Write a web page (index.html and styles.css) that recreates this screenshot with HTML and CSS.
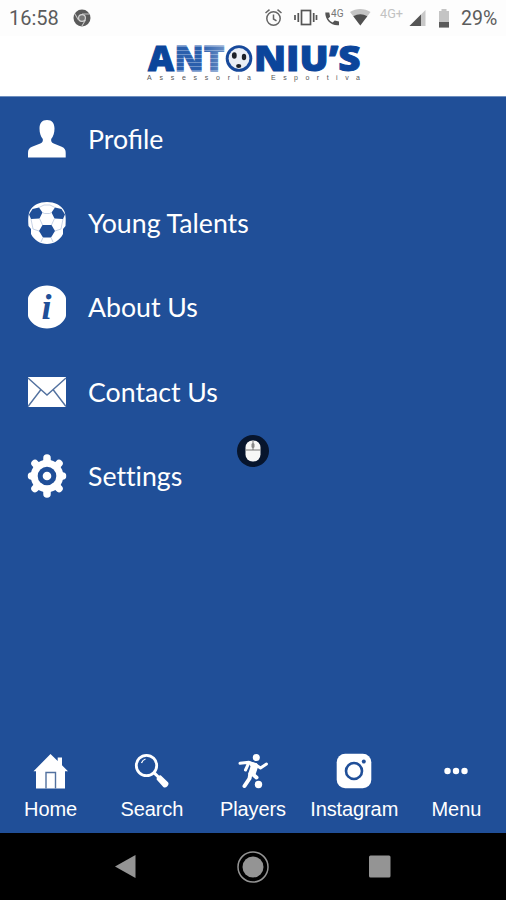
FILE: index.html
```html
<!DOCTYPE html>
<html lang="en">
<head>
  <meta charset="UTF-8">
  <meta name="viewport" content="width=device-width, initial-scale=1.0">
  <title>Menu - Antoniu's Assessoria Esportiva</title>
  <link rel="stylesheet" href="styles.css">
</head>
<body>
  <div class="status-bar">
    <span class="status-time">16:58</span>
    <svg class="status-chrome" width="18" height="18" viewBox="0 0 18 18">
      <circle cx="9" cy="9" r="8.5" fill="#5a5a5a"/>
      <path d="M9 5h7.5M5.500 11L1.800 4.700M12.500 11L8.800 17.300" stroke="#c4c4c4" stroke-width="1.1"/>
      <circle cx="9" cy="9" r="3.400" fill="#777" stroke="#d5d5d5" stroke-width="1.200"/>
    </svg>
    <svg class="status-icons" width="170" height="22" viewBox="261 7 170 22">
      <!-- alarm -->
      <g fill="none" stroke="#666" stroke-width="1.5">
        <circle cx="273.500" cy="18.500" r="6.700"/>
        <path d="M273.500 14.500v4.500l3 1.800M265.500 13l4-3.400M281.500 13l-4-3.400"/>
      </g>
      <!-- vibrate -->
      <g fill="none" stroke="#555" stroke-width="1.700">
        <rect x="301.500" y="10.500" width="9" height="14"/>
        <path d="M298.300 13v9M295 15v5M313.700 13v9M316.500 15v5"/>
      </g>
      <!-- call over 4G -->
      <path d="M325.300 12.500h4l.8 4.200-2 1.800c1.300 2 2.600 3.200 4.600 4.100l2-2 4.300.9v3.700c-8 .9-14-5.500-13.700-12.700z" fill="#555"/>
      <text class="tiny-label" x="331" y="17" textLength="12.500" lengthAdjust="spacingAndGlyphs">4G</text>
      <!-- wifi -->
      <path d="M350 12c6-4 14.500-4 20.500 0L360.300 25.500z" fill="#c4c4c4"/>
      <path d="M353.300 16.200c4.500-2.700 9.500-2.700 14 0l-7 9.300z" fill="#505050"/>
      <text class="network-label" x="380" y="18" textLength="23" lengthAdjust="spacingAndGlyphs">4G+</text>
      <!-- signal -->
      <path d="M425.500 10v16H409.500z" fill="#c8c8c8"/>
      <path d="M421 14.500V26h-11.500z" fill="#555"/>
    </svg>
    <svg class="status-battery" width="12" height="19" viewBox="0 0 12 19">
      <path d="M3.500 0h5v2H11v16.500H1V2h2.500z" fill="#c4c4c4"/>
      <path d="M1 13h10v5.500H1z" fill="#5a5a5a"/>
    </svg>
    <span class="status-percent">29%</span>
  </div>

  <header class="header">
    <svg class="logo" width="218" height="46" viewBox="0 0 218 46">
      <defs>
        <pattern id="stripes" width="4" height="4" patternUnits="userSpaceOnUse">
          <rect width="4" height="4" fill="#2b5fac"/>
          <rect width="4" height="1" fill="#6f93c9"/>
        </pattern>
        <linearGradient id="fade">
          <stop offset="0" stop-color="#fff" stop-opacity="0"/>
          <stop offset="1" stop-color="#fff" stop-opacity=".3"/>
        </linearGradient>
      </defs>
      <text class="logo-name solid" x="4" y="32.500" textLength="26" lengthAdjust="spacingAndGlyphs">A</text>
      <text class="logo-name striped" x="30.500" y="32.500" textLength="50" lengthAdjust="spacingAndGlyphs">NT</text>
      <path d="M57 6h24v27H57z" fill="url(#fade)"/>
      <circle cx="95" cy="20.500" r="13.300" fill="#17499b"/>
      <circle cx="95" cy="20.500" r="10.400" fill="#e9eef5"/>
      <g fill="#1b2028">
        <ellipse cx="90.300" cy="17.500" rx="2.400" ry="3.300"/>
        <ellipse cx="100" cy="19" rx="2.200" ry="3.300"/>
        <ellipse cx="94.700" cy="28" rx="2.600" ry="2"/>
      </g>
      <text class="logo-name solid" x="110" y="32.500" textLength="106.500" lengthAdjust="spacingAndGlyphs">NIU’S</text>
      <text class="logo-tagline" x="3" y="41.500" textLength="104">Assessoria</text>
      <text class="logo-tagline" x="127" y="41.500" textLength="89">Esportiva</text>
    </svg>
  </header>

  <main class="menu">
    <a class="menu-item" href="#">
      <svg width="40" height="44" viewBox="0 0 40 44">
        <path d="M20 3c5 0 7.500 3.300 7.500 8.500 0 5-1.200 7.800-3.300 10.500-.3 2.500.3 3.500 2.500 4.500l8 3.200c3 1.300 4 3 4 6.300v4.500H1V36c0-3.300 1-5 4-6.300l8.300-3.200c2.200-1 2.800-2 2.500-4.500-2.100-2.700-3.300-5.500-3.300-10.500C12.500 6.300 15 3 20 3z"/>
      </svg>
      <span>Profile</span>
    </a>
    <a class="menu-item" href="#">
      <svg width="40" height="44" viewBox="0 0 40 44">
        <path d="M20 1c8 0 13 3 16 7 3 4 3 10 2.500 17L36 28v5c-3 6-9 10-16 10S7 39 4 33v-5l-2.500-3C1 18 1 12 4 8c3-4 8-7 16-7z"/>
        <g class="cut">
          <path d="M5.500 8L12 6.500l3.500 5-3 6-8.500.5-2-4.500z"/>
          <path d="M34.500 8L28 6.500l-3.500 5 3 6 8.500.5 2-4.500z"/>
          <path d="M15.500 24h9l3.500 6-4 6.500h-8L12 30z"/>
        </g>
        <path class="seam" d="M12 6.500L17 4h6l5 2.500M15.500 11.500l2 1h5l2-1M12.500 17.500l3 6.500M27.500 17.500l-3 6.500M4 18l2 10 6 2M36 18l-2 10-6 2M16 36.500L14 41M24 36.500L26 41"/>
      </svg>
      <span>Young Talents</span>
    </a>
    <a class="menu-item" href="#">
      <svg width="40" height="44" viewBox="0 0 40 44">
        <path d="M20 .5c8 0 14.500 4 17.700 9.500.9 1.500 1.300 2.500 1.300 4v16c0 1.500-.4 2.500-1.300 4-3.200 5.500-9.700 9.500-17.700 9.500S5.500 39.500 2.300 34C1.400 32.500 1 31.500 1 30V14c0-1.500.4-2.500 1.300-4C5.500 4.500 12 .5 20 .5z"/>
        <text class="info-letter" x="14.500" y="33.500">i</text>
      </svg>
      <span>About Us</span>
    </a>
    <a class="menu-item" href="#">
      <svg width="40" height="44" viewBox="0 0 40 44">
        <path d="M1 7h38v30H1z"/>
        <path class="fold" d="M1 8l19 17L39 8M1 36.500l13-17M39 36.500l-13-17"/>
      </svg>
      <span>Contact Us</span>
    </a>
    <a class="menu-item" href="#">
      <svg width="40" height="44" viewBox="0 0 40 44">
        <circle cx="20" cy="22" r="16.300"/>
        <path class="teeth" d="M20 4v36M4.500 22h31M8 9.500l24 25M32 9.500l-24 25"/>
        <circle class="cut" cx="20" cy="22" r="9.300"/>
        <circle cx="20" cy="22" r="4.300"/>
      </svg>
      <span class="no-ligatures">Settings</span>
    </a>

    <div class="pointer">
      <svg width="16" height="22" viewBox="0 0 16 22">
        <rect x=".5" y=".5" width="15" height="21" rx="7" fill="#f7f7f7"/>
        <path d="M.5 10h15M8 1v9" stroke="#777" stroke-width="1"/>
        <rect x="6.500" y="3" width="3" height="5" rx="1.500" fill="#888"/>
      </svg>
    </div>
  </main>

  <nav class="tab-bar">
    <a class="tab" href="#">
      <svg width="36" height="36" viewBox="0 0 36 36">
        <path d="M17.500 1l7.200 7V4.500H29v7.800l6 6h-3V35.500H3V18.300H.5z"/>
        <path class="fold" d="M13 35.500V19.500h9.500v16"/>
      </svg>
      <span>Home</span>
    </a>
    <a class="tab" href="#">
      <svg width="36" height="36" viewBox="0 0 36 36">
        <circle class="lens" cx="12.500" cy="12.500" r="10.200"/>
        <path d="M18.500 20.500l2.500-2 4 4 1.700-.2 7.300 7c2 2-2 6.800-4.700 4.700l-6.700-7.500.2-2z"/>
        <path class="glint" d="M7.500 10c.7-2 2-3.300 4-4"/>
      </svg>
      <span>Search</span>
    </a>
    <a class="tab" href="#">
      <svg width="36" height="36" viewBox="0 0 36 36">
        <circle cx="21.300" cy="4.500" r="3.500"/>
        <path class="limb" d="M5 10.300l9-1 7 2.700 4.500 3 6-4M13.500 10.500L10.500 17"/>
        <path d="M13 8l9 2.200 1.300 3-3.300 9.800-7-1.500 2.500-8z"/>
        <path class="leg" d="M15.500 20.500l-1 5-5 7.500M17.500 21l4 3.500"/>
        <circle cx="23.500" cy="31.500" r="3.700"/>
      </svg>
      <span>Players</span>
    </a>
    <a class="tab" href="#">
      <svg width="36" height="36" viewBox="0 0 36 36">
        <rect x=".7" y=".7" width="34.600" height="34.600" rx="8.500"/>
        <circle class="ring" cx="18" cy="18" r="8"/>
        <circle class="cut" cx="27.800" cy="8.500" r="2"/>
      </svg>
      <span>Instagram</span>
    </a>
    <a class="tab" href="#">
      <svg width="36" height="36" viewBox="0 0 36 36">
        <circle cx="9.500" cy="18" r="3.200"/>
        <circle cx="18" cy="18" r="3.200"/>
        <circle cx="26.500" cy="18" r="3.200"/>
      </svg>
      <span>Menu</span>
    </a>
  </nav>

  <div class="system-nav">
    <svg width="34" height="34" viewBox="0 0 34 34"><path d="M6 16.500L26.500 5v23z"/></svg>
    <svg width="34" height="34" viewBox="0 0 34 34">
      <circle cx="17" cy="17" r="10.500"/>
      <circle class="outline" cx="17" cy="17" r="15"/>
    </svg>
    <svg width="34" height="34" viewBox="0 0 34 34"><rect x="6" y="5.500" width="21.500" height="22" rx="1.500"/></svg>
  </div>
</body>
</html>
```
FILE: styles.css
```css
:root {
  --blue: #204f98;
  --logo-blue: #0b459b;
  --status-color: #5c5c5c;
}

* {
  margin: 0;
  padding: 0;
  box-sizing: border-box;
}

body {
  display: flex;
  flex-direction: column;
  height: 100vh;
  overflow: hidden;
  background-color: var(--blue);
  color: #fff;
  font-family: Lato, sans-serif;
}

a {
  color: inherit;
  text-decoration: none;
}

/* Status bar */
.status-bar {
  display: flex;
  align-items: center;
  height: 36px;
  padding: 0 8px 0 9px;
  background-color: #fdfdfd;
  color: var(--status-color);
  font-family: Roboto, sans-serif;
  font-size: 20px;
}

.status-chrome {
  margin-left: 14px;
}

.status-icons {
  margin-left: auto;
}

.status-battery {
  margin-left: 7px;
}

.status-percent {
  width: 37px;
  margin-left: 11px;
  font-size: 19.5px;
}

.tiny-label {
  font-size: 10px;
  fill: #777;
}

.network-label {
  font-size: 12px;
  fill: #c2c2c2;
}

/* Header */
.header {
  display: flex;
  justify-content: center;
  height: 61px;
  padding-top: 2px;
  background-color: #fff;
  border-bottom: 1px solid #6e8fbf;
}

.logo {
  overflow: visible;
}

.logo-name {
  font-family: "Open Sans", sans-serif;
  font-size: 35.5px;
  font-weight: 800;
  stroke-width: 1;
}

.logo-name.solid {
  fill: var(--logo-blue);
  stroke: var(--logo-blue);
}

.logo-name.striped {
  fill: url(#stripes);
  stroke: url(#stripes);
}

.logo-tagline {
  font-family: "Liberation Sans", sans-serif;
  font-size: 7px;
  fill: #555;
}

/* Menu list */
.menu {
  position: relative;
  flex: 1;
}

.menu-item {
  display: flex;
  align-items: center;
  gap: 21px;
  height: 84.4px;
  padding: 0 0 1px 27px;
  font-size: 26.7px;
}

.no-ligatures {
  font-variant-ligatures: none;
}

.menu-item svg,
.tab svg {
  fill: #fff;
}

.menu svg .cut,
.tab svg .cut {
  fill: var(--blue);
}

.seam {
  fill: none;
  stroke: #b9c7de;
  stroke-width: 0.8;
}

.fold {
  fill: none;
  stroke: #52719f;
  stroke-width: 1.4;
}

.teeth {
  stroke: #fff;
  stroke-width: 7.5;
  stroke-linecap: round;
}

.info-letter {
  font-family: "Liberation Serif", serif;
  font-size: 36px;
  font-style: italic;
  font-weight: 700;
  fill: var(--blue);
}

.pointer {
  position: absolute;
  top: 338px;
  left: 237px;
  display: flex;
  align-items: center;
  justify-content: center;
  width: 32px;
  height: 32px;
  border-radius: 50%;
  background-color: #07152d;
}

/* Bottom tabs */
.tab-bar {
  display: grid;
  grid-template-columns: repeat(5, 1fr);
  height: 91px;
  padding-top: 11px;
}

.tab {
  display: flex;
  flex-direction: column;
  align-items: center;
  gap: 9px;
  font-family: "Liberation Sans", sans-serif;
  font-size: 20px;
  letter-spacing: -0.1px;
  line-height: 23px;
}

.tab:last-child {
  padding-left: 2px;
}

.lens {
  fill: none;
  stroke: #fff;
  stroke-width: 2.8;
}

.glint {
  fill: none;
  stroke: #fff;
  stroke-width: 1.3;
}

.limb,
.leg {
  fill: none;
  stroke: #fff;
  stroke-width: 3;
  stroke-linecap: round;
  stroke-linejoin: round;
}

.leg {
  stroke-width: 4;
}

.ring {
  fill: none;
  stroke: var(--blue);
  stroke-width: 2.6;
}

/* Android navigation */
.system-nav {
  display: flex;
  justify-content: center;
  align-items: center;
  gap: 93px;
  height: 67px;
  background-color: #000;
}

.system-nav svg {
  fill: #949494;
}

.system-nav .outline {
  fill: none;
  stroke: #949494;
  stroke-width: 1.5;
}
```
